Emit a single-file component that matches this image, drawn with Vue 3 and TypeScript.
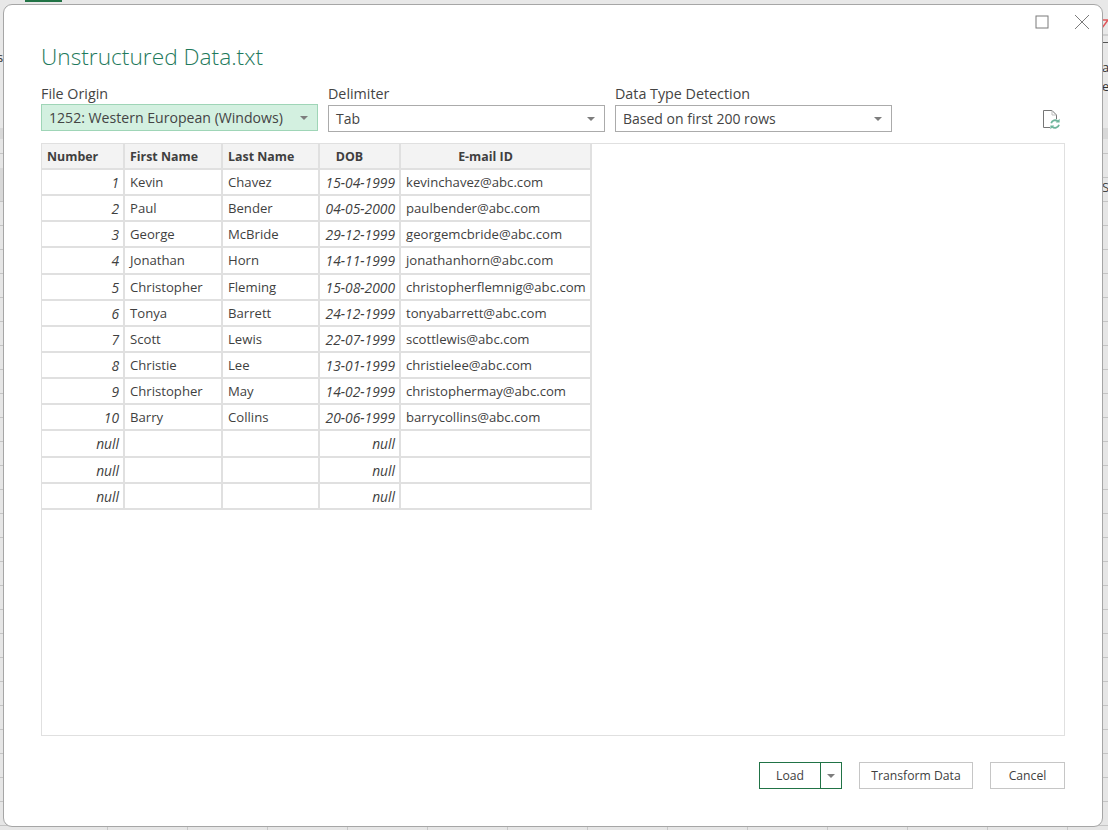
<script setup lang="ts">
interface Row { n: string; first: string; last: string; dob: string; email: string }
const rows: Row[] = [
  { n: '1', first: 'Kevin', last: 'Chavez', dob: '15-04-1999', email: 'kevinchavez@abc.com' },
  { n: '2', first: 'Paul', last: 'Bender', dob: '04-05-2000', email: 'paulbender@abc.com' },
  { n: '3', first: 'George', last: 'McBride', dob: '29-12-1999', email: 'georgemcbride@abc.com' },
  { n: '4', first: 'Jonathan', last: 'Horn', dob: '14-11-1999', email: 'jonathanhorn@abc.com' },
  { n: '5', first: 'Christopher', last: 'Fleming', dob: '15-08-2000', email: 'christopherflemnig@abc.com' },
  { n: '6', first: 'Tonya', last: 'Barrett', dob: '24-12-1999', email: 'tonyabarrett@abc.com' },
  { n: '7', first: 'Scott', last: 'Lewis', dob: '22-07-1999', email: 'scottlewis@abc.com' },
  { n: '8', first: 'Christie', last: 'Lee', dob: '13-01-1999', email: 'christielee@abc.com' },
  { n: '9', first: 'Christopher', last: 'May', dob: '14-02-1999', email: 'christophermay@abc.com' },
  { n: '10', first: 'Barry', last: 'Collins', dob: '20-06-1999', email: 'barrycollins@abc.com' },
  { n: 'null', first: '', last: '', dob: 'null', email: '' },
  { n: 'null', first: '', last: '', dob: 'null', email: '' },
  { n: 'null', first: '', last: '', dob: 'null', email: '' },
]
const selects = [
  { label: 'File Origin', value: '1252: Western European (Windows)', active: true },
  { label: 'Delimiter', value: 'Tab', active: false },
  { label: 'Data Type Detection', value: 'Based on first 200 rows', active: false },
]
</script>

<template>
  <div class="screen">
    <div class="ribbon"></div>
    <div class="tab-mark"></div>
    <div class="band band-l1"></div>
    <div class="band band-l2"></div>
    <div class="band band-r1"></div>
    <svg class="peek-icon" width="6" height="26" viewBox="0 0 6 26">
      <path d="M0 2 H6 M6 2 L0 10" stroke="#e0565a" stroke-width="1.5" fill="none" />
      <path d="M0 17 H6" stroke="#b4b4b4" stroke-width="1" />
      <path d="M0 24.5 H6" stroke="#555" stroke-width="1" />
    </svg>
    <div class="peek peek-s">s</div>
    <div class="peek peek-a">a</div>
    <div class="peek peek-e">e</div>
    <div class="peek peek-S">S</div>

    <section class="dialog">
      <div class="win-controls">
        <svg width="14" height="14" viewBox="0 0 14 14">
          <rect x="1" y="1" width="12" height="12" fill="none" stroke="#7b7b7b" stroke-width="1" />
        </svg>
        <svg width="16" height="16" viewBox="0 0 16 16">
          <path d="M1 1 L15 15 M15 1 L1 15" stroke="#7b7b7b" stroke-width="1" fill="none" />
        </svg>
      </div>

      <h1 class="title">Unstructured Data.txt</h1>

      <div class="options">
        <div v-for="s in selects" :key="s.label" class="field">
          <div class="field-label">{{ s.label }}</div>
          <div class="select" :class="{ active: s.active }">
            <span>{{ s.value }}</span>
            <i class="caret"></i>
          </div>
        </div>
        <svg class="refresh" width="22" height="22" viewBox="0 0 22 22">
          <path d="M9 18.5 H2.5 V1.5 H11 L15.5 6 V10" fill="none" stroke="#767676" stroke-width="1" />
          <path d="M11 1.5 V6 H15.5" fill="none" stroke="#bdbdbd" stroke-width="1" />
          <path d="M10.2 14.2 A4 4 0 0 1 16.8 12.4" fill="none" stroke="#6db59b" stroke-width="1.8" />
          <path d="M14.8 13.6 H18.6 V9.8 Z" fill="#6db59b" />
          <path d="M18 15.8 A4 4 0 0 1 11.2 17.6" fill="none" stroke="#6db59b" stroke-width="1.8" />
          <path d="M13.2 16.4 H9.4 V20.2 Z" fill="#6db59b" />
        </svg>
      </div>

      <div class="preview">
        <div class="table">
          <div class="row head">
            <div class="cell c1">Number</div>
            <div class="cell c2">First Name</div>
            <div class="cell c3">Last Name</div>
            <div class="cell c4 center">DOB</div>
            <div class="cell c5 center">E-mail ID</div>
          </div>
          <div v-for="(r, i) in rows" :key="i" class="row">
            <div class="cell c1 num">{{ r.n }}</div>
            <div class="cell c2">{{ r.first }}</div>
            <div class="cell c3">{{ r.last }}</div>
            <div class="cell c4 num">{{ r.dob }}</div>
            <div class="cell c5">{{ r.email }}</div>
          </div>
        </div>
      </div>

      <div class="actions">
        <div class="split">
          <div class="split-main">Load</div>
          <div class="split-caret"><i class="caret"></i></div>
        </div>
        <div class="btn transform">Transform Data</div>
        <div class="btn cancel">Cancel</div>
      </div>
    </section>
  </div>
</template>

<style>
html, body { margin: 0; padding: 0; }
</style>

<style scoped>
.screen {
  position: relative;
  width: 1108px;
  height: 830px;
  overflow: hidden;
  box-sizing: border-box;
  padding: 4px 5px 3px 3px;
  font-family: "Open Sans", "Noto Sans", sans-serif;
  color: #3f3f3f;
  background-color: #e6e6e6;
  background-image:
    repeating-linear-gradient(to bottom, transparent 0, transparent 23px, #c4c4c4 23px, #c4c4c4 24px),
    repeating-linear-gradient(to right, transparent 0, transparent 79px, #c8c8c8 79px, #c8c8c8 80px);
  background-position: 0 10px, 28px 0;
}
.ribbon {
  position: absolute;
  left: 0;
  top: 0;
  width: 100%;
  height: 128px;
  background: #e8e8e8;
}
.tab-mark {
  position: absolute;
  left: 25px;
  top: 0;
  width: 37px;
  height: 2px;
  background: #217346;
}
.peek {
  position: absolute;
  font-size: 13px;
  line-height: 16px;
  color: #333;
}
.peek-s { left: -3px; top: 49px; }
.peek-a { left: 1102px; top: 59px; }
.peek-e { left: 1102px; top: 78px; }
.peek-S { left: 1102px; top: 179px; color: #444; }
.peek-icon { position: absolute; left: 1102px; top: 18px; }
.band { position: absolute; background: #d8d8d8; }
.band-l1 { left: 0; top: 128px; width: 4px; height: 11px; }
.band-l2 { left: 0; top: 168px; width: 4px; height: 33px; }
.band-r1 { left: 1102px; top: 128px; width: 6px; height: 11px; }

.dialog {
  position: relative;
  box-sizing: border-box;
  height: 823px;
  width: 1100px;
  background: #fff;
  border: 1px solid #a6a6a6;
  border-radius: 9px;
  padding: 0 37px;
  display: flex;
  flex-direction: column;
}
.win-controls {
  position: absolute;
  top: 9px;
  right: 12px;
  display: flex;
  align-items: center;
  gap: 25px;
}
.title {
  margin: 34px 0 0;
  font-size: 22.7px;
  line-height: 36px;
  font-weight: 300;
  color: #1f7a5c;
}
.options {
  position: relative;
  display: flex;
  gap: 10px;
  margin-top: 8px;
}
.field { width: 277px; }
.field-label {
  font-size: 14.3px;
  line-height: 22px;
  color: #444;
}
.select {
  box-sizing: border-box;
  height: 27px;
  border: 1px solid #ababab;
  padding: 0 9px 0 7px;
  display: flex;
  align-items: center;
  justify-content: space-between;
  font-size: 14px;
  color: #444;
}
.select.active {
  background: #d3f0e0;
  border-color: #9fd5b7;
  margin-top: -1px;
  font-size: 14.1px;
}
.caret {
  display: block;
  width: 0;
  height: 0;
  border-left: 4px solid transparent;
  border-right: 4px solid transparent;
  border-top: 4px solid #7d7d7d;
}
.refresh {
  position: absolute;
  right: 2px;
  top: 26px;
}
.preview {
  box-sizing: border-box;
  margin-top: 11px;
  height: 593px;
  border: 1px solid #e0e0e0;
}
.table { width: 550px; font-size: 13.15px; }
.row {
  display: grid;
  grid-template-columns: 83px 98px 97px 81px 191px;
  height: 26.15px;
  box-sizing: border-box;
  border-bottom: 2px solid #e0e0e0;
}
.row.head {
  height: 26px;
  background: #f3f3f3;
  font-weight: 700;
  font-size: 12.4px;
}
.cell {
  box-sizing: border-box;
  padding: 0 5px;
  line-height: 25px;
  white-space: nowrap;
  border-right: 2px solid #e0e0e0;
  overflow: hidden;
}
.c5 { padding-right: 0; }
.center { text-align: center; padding-right: 25px; }
.c5.center { padding-right: 25px; }
.num { text-align: right; font-style: italic; font-size: 13.8px; padding-right: 4px; }
.actions {
  display: flex;
  justify-content: flex-end;
  align-items: center;
  margin-top: 26px;
  font-size: 12.2px;
}
.split {
  display: flex;
  height: 27px;
  box-sizing: border-box;
  border: 1px solid #217346;
  margin-right: 17px;
}
.split-main {
  box-sizing: border-box;
  width: 61px;
  text-align: center;
  line-height: 25px;
  border-right: 1px solid #217346;
}
.split-caret {
  width: 20px;
  display: flex;
  align-items: center;
  justify-content: center;
}
.btn {
  box-sizing: border-box;
  height: 27px;
  border: 1px solid #c6c6c6;
  text-align: center;
  line-height: 25px;
}
.transform { width: 114px; margin-right: 17px; }
.cancel { width: 75px; }
</style>
